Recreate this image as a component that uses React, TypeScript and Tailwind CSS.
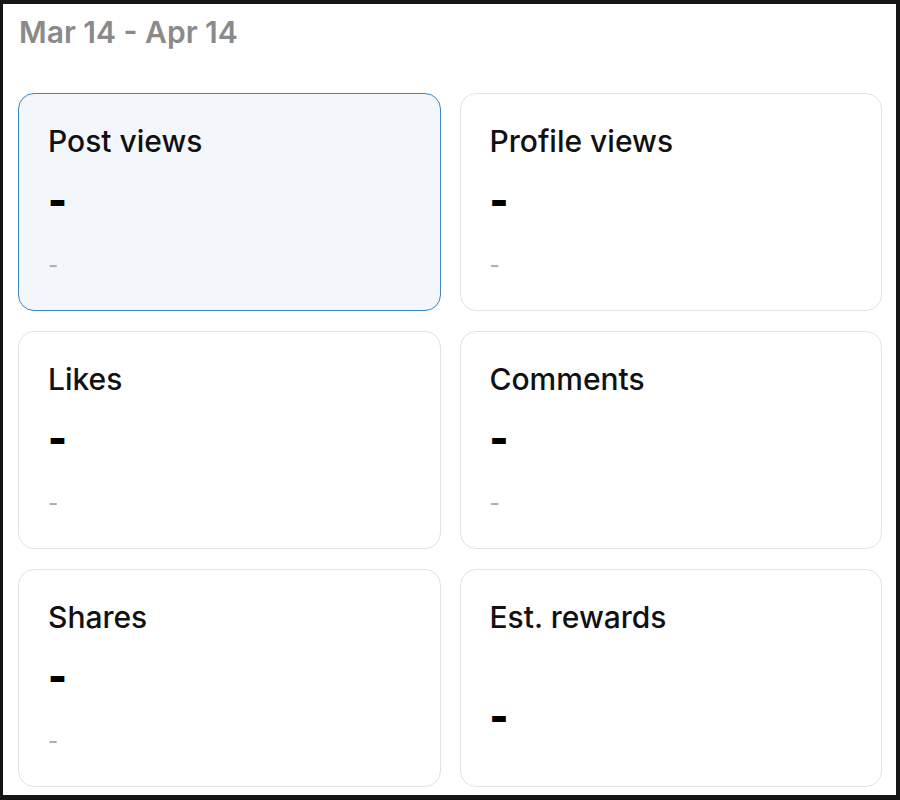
import React from 'react';

const stats = [
  { label: "Post views", value: "-", change: "-", active: true },
  { label: "Profile views", value: "-", change: "-" },
  { label: "Likes", value: "-", change: "-" },
  { label: "Comments", value: "-", change: "-" },
  { label: "Shares", value: "-", change: "-" },
  { label: "Est. rewards", value: "-" },
];

export default function App() {
  return (
    <div className="h-[800px] bg-[#161616] pt-[4px] pl-[3px] pr-[4px] pb-[5px]" style={{ fontFamily: 'Inter, "Noto Sans", sans-serif' }}>
      <div className="h-full bg-white pl-[15px] pr-[14px]">
        <div className="pt-[10px] pl-[1px] text-[30px] leading-[36px] font-semibold text-[#8a8a8a]">Mar 14 - Apr 14</div>
        <div className="mt-[43px] grid grid-cols-2 gap-x-[19px] gap-y-[20px]">
          {stats.map((s) => (
            <div
              key={s.label}
              className={
                "h-[218px] rounded-[16px] border pl-[29px] pt-[29px] flex flex-col " +
                (s.active ? "border-[#3a87c9] bg-[#f3f7fc]" : "border-[#e2e2e2] bg-white")
              }
            >
              <div className="text-[30px] leading-[36px] font-medium text-[#111]">{s.label}</div>
              {s.change !== undefined ? (
                <>
                  <div className="mt-[22px] text-[40px] leading-[40px] font-black text-black">{s.value}</div>
                  <div className="mt-[32px] text-[22px] leading-[24px] font-medium text-[#b0b0b0]">{s.change}</div>
                </>
              ) : (
                <div className="mt-[62px] text-[40px] leading-[40px] font-black text-black">{s.value}</div>
              )}
            </div>
          ))}
        </div>
      </div>
    </div>
  );
}
